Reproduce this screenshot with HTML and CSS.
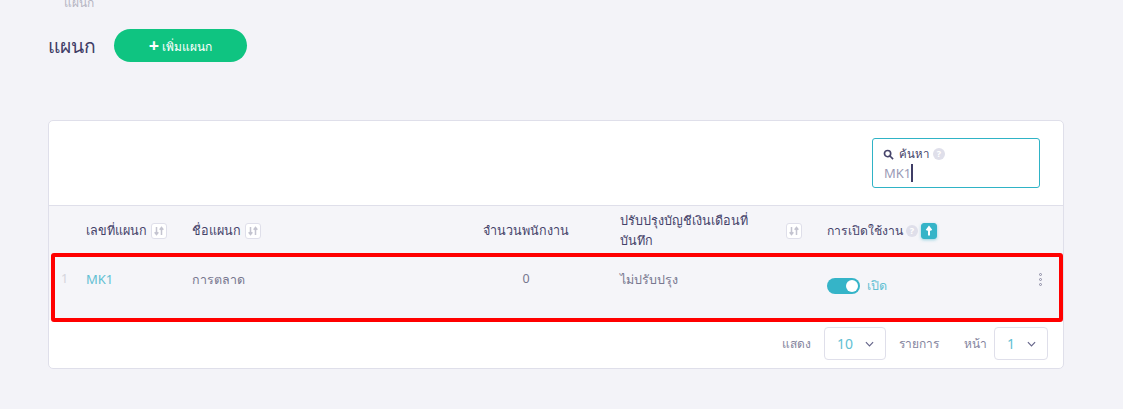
FILE: index.html
```html
<!DOCTYPE html>
<html lang="th">
<head>
  <meta charset="UTF-8">
  <title>แผนก</title>
  <link rel="stylesheet" href="styles.css">
</head>
<body>
  <svg class="defs">
    <symbol id="arrows" viewBox="0 0 14 14">
      <path d="M4.5 3v7M2.7 8.2l1.8 2.3 1.8-2.3"/>
      <path d="M9.5 11V4M7.7 5.8l1.8-2.3 1.8 2.3"/>
    </symbol>
    <symbol id="arrow-up" viewBox="0 0 14 14">
      <path d="M7 11.5V4M4.6 6.4L7 3.2l2.4 3.2"/>
    </symbol>
  </svg>

  <div class="crumb">แผนก</div>
  <div class="title-row">
    <h1>แผนก</h1>
    <button class="add-button"><span class="plus">+</span> เพิ่มแผนก</button>
  </div>

  <div class="card">
    <div class="toolbar">
      <div class="search">
        <div class="search-label">
          <svg class="search-icon" viewBox="0 0 12 12"><circle cx="5" cy="5" r="3.4"/><line x1="7.6" y1="7.6" x2="11" y2="11"/></svg>
          ค้นหา
          <span class="help">?</span>
        </div>
        <div class="search-value">MK1<span class="caret"></span></div>
      </div>
    </div>

    <div class="grid head">
      <div></div>
      <div class="cell">เลขที่แผนก <span class="sort"><svg><use href="#arrows"/></svg></span></div>
      <div class="cell">ชื่อแผนก <span class="sort"><svg><use href="#arrows"/></svg></span></div>
      <div class="center">จำนวนพนักงาน</div>
      <div class="cell between"><span class="wrap">ปรับปรุงบัญชีเงินเดือนที่บันทึก</span><span class="sort"><svg><use href="#arrows"/></svg></span></div>
      <div class="cell status-head">การเปิดใช้งาน <span class="help">?</span> <span class="sort active"><svg><use href="#arrow-up"/></svg></span></div>
      <div></div>
    </div>

    <div class="grid row">
      <div class="index">1</div>
      <div class="link code">MK1</div>
      <div>การตลาด</div>
      <div class="center">0</div>
      <div>ไม่ปรับปรุง</div>
      <div class="cell status"><span class="switch"><span class="knob"></span></span><span class="link">เปิด</span></div>
      <div class="dots"><i></i><i></i><i></i></div>
    </div>

    <div class="pager">
      <span>แสดง</span>
      <div class="select wide"><span class="link">10</span><svg viewBox="0 0 10 6"><polyline points="1,1 5,5 9,1"/></svg></div>
      <span class="after">รายการ</span>
      <span class="page-label">หน้า</span>
      <div class="select"><span class="link">1</span><svg viewBox="0 0 10 6"><polyline points="1,1 5,5 9,1"/></svg></div>
    </div>

    <div class="highlight"></div>
  </div>
</body>
</html>
```

FILE: styles.css
```css
body {
  margin: 0;
  padding: 0 59px 0 48px;
  background: #f3f3f8;
  color: #45436a;
  font-family: "Noto Sans", "Open Sans", sans-serif;
  font-size: 13px;
  overflow: hidden;
}
.defs {
  display: none;
}
.crumb {
  margin: -6px 0 0 16px;
  height: 17px;
  line-height: 17px;
  font-size: 12px;
  color: #b5b5c3;
}
.title-row {
  display: flex;
  align-items: center;
  gap: 18px;
  margin-top: 18px;
}
h1 {
  margin: 0;
  font-size: 19.3px;
  font-weight: 500;
  line-height: 33px;
  color: #3f3d66;
}
.add-button {
  width: 133px;
  height: 33px;
  border: none;
  border-radius: 17px;
  background: #0fc481;
  color: white;
  font-family: inherit;
  font-size: 12px;
}
.plus {
  font-size: 18px;
  font-weight: bold;
  line-height: 1;
  vertical-align: -1px;
}
.card {
  position: relative;
  margin-top: 58px;
  height: 247px;
  background: white;
  border: 1px solid #dfdfea;
  border-radius: 5px;
}
.toolbar {
  display: flex;
  justify-content: flex-end;
  height: 85px;
  padding: 17px 23px 0 0;
  box-sizing: border-box;
  border-bottom: 1px solid #dfdfea;
}
.search {
  width: 168px;
  height: 50px;
  box-sizing: border-box;
  padding: 6px 10px;
  border: 1px solid #2fb3c6;
  border-radius: 3px;
}
.search-label {
  display: flex;
  align-items: center;
  gap: 4px;
  font-size: 11.5px;
  line-height: 18px;
}
.search-icon {
  width: 11px;
  height: 11px;
  margin-right: 1px;
  fill: none;
  stroke: #45436a;
  stroke-width: 1.8;
}
.help {
  display: inline-block;
  width: 12px;
  height: 12px;
  border-radius: 50%;
  background: #dfdfea;
  color: white;
  font-size: 9px;
  font-weight: bold;
  line-height: 12px;
  text-align: center;
}
.search-value {
  display: flex;
  align-items: center;
  height: 19px;
  padding-left: 1px;
  font-size: 13px;
  color: #9a9ab5;
}
.caret {
  width: 2px;
  height: 18px;
  background: #3f3d66;
}
.grid {
  display: grid;
  grid-template-columns: 37px 106px 240px 188px 207px 1fr 34px;
  align-items: center;
  background: #f5f5f9;
}
.head {
  height: 47px;
  box-sizing: border-box;
  padding-top: 2px;
  font-size: 12.6px;
  line-height: 20px;
}
.row {
  height: 67px;
  font-size: 12.5px;
  color: #77778f;
  align-items: start;
  padding-top: 17px;
  box-sizing: border-box;
}
.cell {
  display: flex;
  align-items: center;
  gap: 4px;
}
.status-head {
  gap: 3px;
  font-size: 12.2px;
}
.between {
  justify-content: space-between;
  padding-right: 25px;
}
.wrap {
  width: 160px;
}
.center {
  text-align: center;
}
.sort {
  width: 16px;
  height: 16px;
  box-sizing: border-box;
  border: 1px solid #dfdfea;
  border-radius: 3px;
  background: white;
  flex: none;
}
.sort svg {
  display: block;
  width: 14px;
  height: 14px;
  fill: none;
  stroke: #c4c4d0;
  stroke-width: 1.5;
}
.sort.active {
  border-color: #35b4c8;
  background: #35b4c8;
  box-shadow: 0 1px 3px rgba(53, 180, 200, 0.5);
}
.sort.active svg {
  stroke: white;
  stroke-width: 2;
}
.index {
  padding-left: 12px;
  color: #d4d4dc;
}
.link {
  color: #62c0d3;
}
.code {
  font-size: 13px;
}
.status {
  gap: 7px;
  padding-top: 6px;
}
.switch {
  display: flex;
  justify-content: flex-end;
  align-items: center;
  width: 33px;
  height: 16px;
  padding: 0 2px;
  box-sizing: border-box;
  border-radius: 8px;
  background: #35b4c8;
}
.knob {
  width: 12px;
  height: 12px;
  border-radius: 50%;
  background: white;
}
.dots {
  display: flex;
  flex-direction: column;
  gap: 2px;
  width: 3px;
  margin: 3px 0 0 10px;
}
.dots i {
  height: 3px;
  box-sizing: border-box;
  border: 1px solid #8a8aa3;
  border-radius: 50%;
}
.pager {
  display: flex;
  justify-content: flex-end;
  align-items: center;
  gap: 13px;
  height: 47px;
  padding-right: 15px;
  font-size: 12px;
  color: #85859e;
}
.after {
  margin-right: 12px;
}
.page-label {
  margin-right: -6px;
}
.select {
  display: flex;
  justify-content: space-between;
  align-items: center;
  width: 54px;
  height: 33px;
  box-sizing: border-box;
  padding: 0 11px 0 12px;
  border: 1px solid #dfdfea;
  border-radius: 4px;
  font-size: 14px;
}
.select.wide {
  width: 62px;
}
.select svg {
  width: 9px;
  height: 6px;
  fill: none;
  stroke: #66668a;
  stroke-width: 1.3;
}
.highlight {
  position: absolute;
  left: 2px;
  right: 0;
  top: 132px;
  height: 61px;
  border: 4px solid #f00;
  border-radius: 3px;
}
```
